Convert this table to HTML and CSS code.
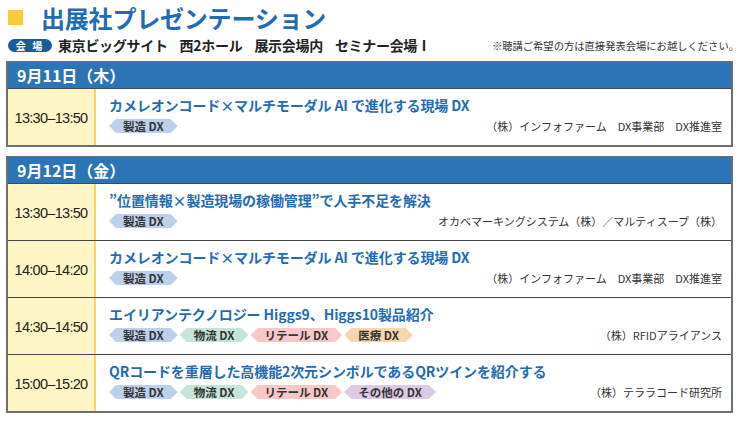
FILE: index.html
```html
<!DOCTYPE html>
<html lang="ja">
<head>
    <meta charset="UTF-8">
    <title>出展社プレゼンテーション</title>
    <link rel="stylesheet" href="styles.css">
</head>
<body>
    <div class="page">
        <h1 class="title"><span class="mark"></span>出展社プレゼンテーション</h1>

        <div class="venue">
            <span class="pill">会 場</span>
            <span class="place">東京ビッグサイト</span>
            <span class="place">西2ホール</span>
            <span class="place">展示会場内</span>
            <span class="place">セミナー会場Ⅰ</span>
            <span class="note">※聴講ご希望の方は直接発表会場にお越しください。</span>
        </div>

        <div class="day">
            <div class="day-head">9月11日（木）</div>
            <div class="row">
                <div class="time">13:30–13:50</div>
                <div class="info">
                    <div class="talk">カメレオンコード×マルチモーダル AI で進化する現場 DX</div>
                    <div class="meta">
                        <div class="tags"><span class="tag blue">製造 DX</span></div>
                        <div class="company">（株）インフォファーム　DX事業部　DX推進室</div>
                    </div>
                </div>
            </div>
        </div>

        <div class="day">
            <div class="day-head">9月12日（金）</div>
            <div class="row">
                <div class="time">13:30–13:50</div>
                <div class="info">
                    <div class="talk">”位置情報×製造現場の稼働管理”で人手不足を解決</div>
                    <div class="meta">
                        <div class="tags"><span class="tag blue">製造 DX</span></div>
                        <div class="company">オカベマーキングシステム（株）／マルティスープ（株）</div>
                    </div>
                </div>
            </div>
            <div class="row">
                <div class="time">14:00–14:20</div>
                <div class="info">
                    <div class="talk">カメレオンコード×マルチモーダル AI で進化する現場 DX</div>
                    <div class="meta">
                        <div class="tags"><span class="tag blue">製造 DX</span></div>
                        <div class="company">（株）インフォファーム　DX事業部　DX推進室</div>
                    </div>
                </div>
            </div>
            <div class="row">
                <div class="time">14:30–14:50</div>
                <div class="info">
                    <div class="talk">エイリアンテクノロジー Higgs9、Higgs10製品紹介</div>
                    <div class="meta">
                        <div class="tags">
                            <span class="tag blue">製造 DX</span>
                            <span class="tag green">物流 DX</span>
                            <span class="tag pink">リテール DX</span>
                            <span class="tag orange">医療 DX</span>
                        </div>
                        <div class="company">（株）RFIDアライアンス</div>
                    </div>
                </div>
            </div>
            <div class="row">
                <div class="time">15:00–15:20</div>
                <div class="info">
                    <div class="talk">QRコードを重層した高機能2次元シンボルであるQRツインを紹介する</div>
                    <div class="meta">
                        <div class="tags">
                            <span class="tag blue">製造 DX</span>
                            <span class="tag green">物流 DX</span>
                            <span class="tag pink">リテール DX</span>
                            <span class="tag purple">その他の DX</span>
                        </div>
                        <div class="company">（株）テララコード研究所</div>
                    </div>
                </div>
            </div>
        </div>
    </div>
</body>
</html>
```

FILE: styles.css
```css
:root {
    --title-blue: #1f6cb4;
    --head-blue: #2b74b6;
    --pill-blue: #1d5a9c;
    --cell-yellow: #fdf6c4;
    --line-yellow: #f5d46c;
    --border: #6e6e6e;
    --text: #222222;
}

body {
    margin: 0;
    font-family: "Noto Sans CJK JP", "Noto Sans", sans-serif;
    color: var(--text);
    background: #ffffff;
}

.page {
    width: 727px;
    padding: 2px 0 0 6px;
}

/* -- 見出し -- */
.title {
    display: flex;
    align-items: center;
    margin: 0;
    height: 30px;
    font-size: 24px;
    font-weight: 700;
    color: var(--title-blue);
    letter-spacing: -0.2px;
}

.mark {
    width: 15px;
    height: 15px;
    background: #fcc93a;
    margin: 0 18px 0 2px;
}

.venue {
    display: flex;
    align-items: center;
    height: 16px;
    margin-top: 5px;
}

.pill {
    background: var(--pill-blue);
    color: #ffffff;
    font-size: 10px;
    font-weight: 700;
    border-radius: 7px;
    width: 44px;
    height: 13px;
    line-height: 13px;
    text-align: center;
    margin-left: 2px;
    margin-right: 6px;
    letter-spacing: 2px;
}

.place {
    font-size: 14px;
    font-weight: 700;
    margin-right: 12px;
    letter-spacing: -0.3px;
}

.note {
    font-size: 10.3px;
    margin-left: auto;
    margin-right: -6px;
    color: #333333;
}

/* -- 日程表 -- */
.day {
    border: 2px solid var(--border);
    border-top-width: 1px;
    margin-top: 8px;
}

.day + .day {
    margin-top: 9px;
}

.day-head {
    background: var(--head-blue);
    color: #ffffff;
    font-size: 16px;
    font-weight: 700;
    height: 26px;
    line-height: 26px;
    padding-left: 9px;
    border-bottom: 1px solid #3a4a5a;
}

.row {
    display: grid;
    grid-template-columns: 88px 1fr;
    height: 56px;
}

.row + .row {
    border-top: 1px solid #444444;
}

.time {
    background: var(--cell-yellow);
    border-right: 2px solid var(--line-yellow);
    display: flex;
    align-items: center;
    justify-content: center;
    font-family: "Liberation Sans", Arial, sans-serif;
    font-size: 14.5px;
    letter-spacing: -0.7px;
    padding-top: 1px;
}

.info {
    padding: 7px 9px 0 13px;
}

.talk {
    color: var(--title-blue);
    font-size: 14px;
    font-weight: 700;
    line-height: 19px;
    letter-spacing: -0.1px;
}

.meta {
    display: flex;
    align-items: center;
    margin-top: 3px;
}

.tags {
    display: flex;
    gap: 2px;
}

.tag {
    font-size: 11.5px;
    font-weight: 700;
    height: 14px;
    line-height: 14px;
    padding: 0 14px 0 14px;
    color: #333333;
    clip-path: polygon(7px 0, calc(100% - 7px) 0, 100% 50%, calc(100% - 7px) 100%, 7px 100%, 0 50%);
}

.blue { background: #bdd0eb; }
.green { background: #c6e4d7; }
.pink { background: #f7c8c8; }
.orange { background: #f7d5ae; }
.purple { background: #dccae4; }

.company {
    margin-left: auto;
    font-size: 11px;
    color: #333333;
}
```
